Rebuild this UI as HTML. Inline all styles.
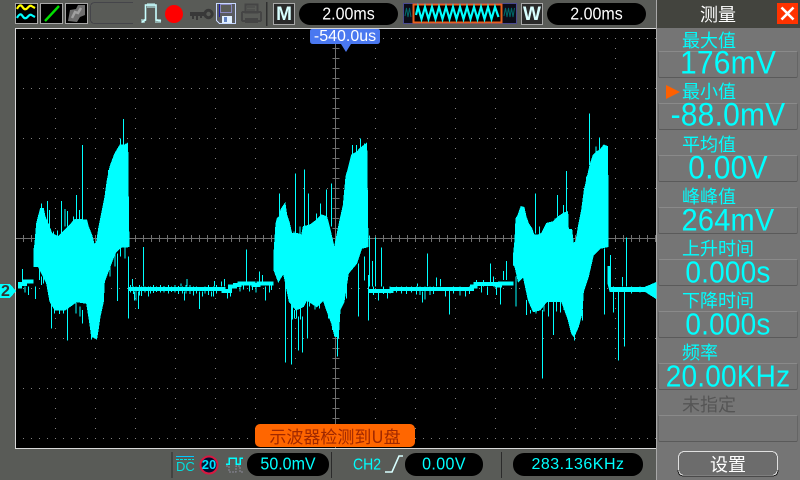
<!DOCTYPE html>
<html><head><meta charset="utf-8">
<style>
html,body{margin:0;padding:0;background:#595b57}
#r{position:relative;width:800px;height:480px;overflow:hidden;background:#595b57;font-family:"Liberation Sans","WenQuanYi Zen Hei",sans-serif}
#r div{position:absolute;box-sizing:border-box;white-space:nowrap}
svg{position:absolute;left:0;top:0}
.pill{background:#000;border-radius:11px;text-align:center;height:23px;line-height:23px;font-size:16px}
.pill span{display:inline-block;transform:scaleY(1.12)}
.cj{font-family:"WenQuanYi Zen Hei","Noto Sans CJK SC",sans-serif}
.lb{left:682px;color:#00ffff;font-size:18px;line-height:20px;height:20px;letter-spacing:0}
.bx{left:658px;width:140px;height:27px;border:1px solid #656565;border-top-color:#8a8a8a;border-bottom-color:#5a5a5a;border-radius:2px}
.v{left:658px;width:140px;text-align:center;color:#00ffff;font-size:30px;line-height:28px;height:28px;letter-spacing:.2px;transform:scaleY(1.08)}
</style></head><body><div id="r">

<div style="left:15px;top:28px;width:642px;height:421px;background:#000"></div>

<svg width="800" height="480" shape-rendering="crispEdges" fill="none">
<line x1="15.5" y1="28" x2="15.5" y2="449" stroke="#d8d8d8"/>
<line x1="15" y1="28.5" x2="657" y2="28.5" stroke="#d8d8d8"/>
<line x1="15" y1="448.5" x2="657" y2="448.5" stroke="#d8d8d8"/>
<line x1="656.5" y1="0" x2="656.5" y2="480" stroke="#a8a8a8"/>
<g stroke="#808080" stroke-dasharray="1 7">
<line x1="23" y1="38.5" x2="656" y2="38.5"/><line x1="23" y1="88.5" x2="656" y2="88.5"/><line x1="23" y1="138.5" x2="656" y2="138.5"/><line x1="23" y1="188.5" x2="656" y2="188.5"/><line x1="23" y1="288.5" x2="656" y2="288.5"/><line x1="23" y1="338.5" x2="656" y2="338.5"/><line x1="23" y1="388.5" x2="656" y2="388.5"/><line x1="23" y1="438.5" x2="656" y2="438.5"/>
</g>
<g stroke="#808080" stroke-dasharray="1 9">
<line x1="55.5" y1="38" x2="55.5" y2="448"/><line x1="95.5" y1="38" x2="95.5" y2="448"/><line x1="135.5" y1="38" x2="135.5" y2="448"/><line x1="175.5" y1="38" x2="175.5" y2="448"/><line x1="215.5" y1="38" x2="215.5" y2="448"/><line x1="255.5" y1="38" x2="255.5" y2="448"/><line x1="295.5" y1="38" x2="295.5" y2="448"/><line x1="375.5" y1="38" x2="375.5" y2="448"/><line x1="415.5" y1="38" x2="415.5" y2="448"/><line x1="455.5" y1="38" x2="455.5" y2="448"/><line x1="495.5" y1="38" x2="495.5" y2="448"/><line x1="535.5" y1="38" x2="535.5" y2="448"/><line x1="575.5" y1="38" x2="575.5" y2="448"/><line x1="615.5" y1="38" x2="615.5" y2="448"/>
</g>
<line x1="16" y1="238.5" x2="656" y2="238.5" stroke="#707070"/>
<line x1="335.5" y1="29" x2="335.5" y2="448" stroke="#707070"/>
<line x1="23" y1="238.5" x2="656" y2="238.5" stroke="#707070" stroke-width="7" stroke-dasharray="1 7"/>
<line x1="336" y1="38" x2="336" y2="448" stroke="#707070" stroke-width="7" stroke-dasharray="1 9"/>

<!-- trace 1 -->
<g transform="translate(0,110) scale(.33333)" fill="#00ffff" stroke="#00ffff" stroke-width="3">
<path d="M102 420L105 400 110 340 115 320 122 295 130 295 135 320 148 350 155 370 175 380 190 365 210 345 225 328 260 330 265 350 275 375 283 405 290 395 297 350 305 310 315 260 322 210 330 170 345 130 360 105 375 105 383 100 385 280 387 410 362 412 345 430 330 470 313 515 310 575 300 620 295 655 290 685 275 680 268 630 260 580 230 575 195 600 165 600 150 575 140 520 125 490 115 470 102 470Z"/>
<path fill="none" stroke-width="12" d="M54 530H60V522H75V515H100M387 537H660"/>
<path fill="none" d="M247 105V330M370 27V110M229 255V330M184 273V370M142 273V340M202 303V350M195 297V350M430 411V530M397 507V530M67 477V520M561 507V530M543 520V530M643 513V530M202 570V692M154 570V656M352 430V573M385 440V626M106 530V567M85 530V555M75 530V548M415 545V597M403 545V572M553 545V572M598 545V597M247 600V640M240 590V620M607 545V560M635 545V560"/>
<path fill="none" d="M125 280V320M148 300V360M160 365V400M172 362V400M220 320V350M238 300V340M325 180V240M340 140V200M352 118V160M361 85V130M378 100V160M163 483V610M178 590V612M190 590V610M212 560V590M228 570V610M275 640V688M283 650V685M289 655V688M330 470V500M345 425V470M362 412V440M375 412V445M118 470V510M130 490V520M125 500V525"/>
<path fill="none" d="M392 525V548M400 530V552M408 530V572M418 525V556M425 530V558M435 530V548M445 530V560M452 530V550M460 525V549M470 530V546M482 525V548M492 528V548M505 525V550M515 530V546M525 525V548M535 528V552M548 530V550M558 525V550M570 525V552M580 530V556M590 530V550M615 530V550M625 525V555M640 530V560M650 525V550"/>
</g>
<!-- trace 2 -->
<g transform="translate(220,110) scale(.33333)" fill="#00ffff" stroke="#00ffff" stroke-width="3">
<path d="M162 430L168 340 172 325 178 320 183 298 195 280 200 315 207 335 215 370 230 370 245 375 250 350 270 345 290 330 305 315 320 320 328 350 335 380 343 415 350 380 360 330 370 285 378 200 385 175 395 135 412 125 420 115 440 100 442 255 444 410 425 415 410 460 385 490 372 575 360 600 355 680 345 680 335 640 320 600 310 570 290 590 260 570 250 590 228 600 208 575 195 510 190 490 175 515 162 480Z"/>
<path fill="none" stroke-width="12" d="M0 537H10V543H30V530H45V525H58V520H100V525H115V520H160M446 543H515V537H660"/>
<path fill="none" d="M178 250V320M226 190V370M253 178V350M265 250V350M319 238V320M334 220V350M301 280V320M289 310V340M79 418V520M118 485V520M127 495V520M448 377V530M466 382V530M484 412V530M457 453V530M622 430V530M649 502V530M592 520V530M13 507V530M4 514V530M196 510V758M214 575V764M235 620V722M247 620V728M262 570V686M223 600V626M445 495V632M415 460V620M433 440V512M607 545V578M475 540V572M502 545V566M22 540V566M31 540V560M136 530V572M379 520V566M352 660V740"/>
<path fill="none" d="M397 105V160M409 105V150M421 85V120M433 100V140M380 190V220M222 365V400M240 350V380M218 570V628M229 590V625M241 590V628M268 565V590M285 565V598M298 565V596M355 640V685M338 620V660M325 590V625"/>
<path fill="none" d="M60 525V545M70 520V538M88 525V544M98 525V540M108 525V548M148 525V548M155 518V540M460 530V555M490 530V552M510 530V550M530 530V548M545 530V550M560 530V552M575 530V548M590 530V554M600 530V555M615 530V568M630 530V555M640 530V552"/>
</g>
<!-- trace 3 -->
<g transform="translate(440,110) scale(.33333)" fill="#00ffff" stroke="#00ffff" stroke-width="3">
<path d="M220 440L225 390 228 325 232 320 236 310 243 290 252 292 258 320 265 340 275 355 282 375 295 375 305 370 320 340 340 335 355 320 370 310 383 305 385 358 395 358 400 400 408 395 415 350 425 300 433 240 440 210 450 165 460 135 470 125 480 120 492 105 503 110 504 410 480 415 460 435 445 500 430 545 426 610 415 650 402 680 395 670 385 630 365 575 320 575 300 600 280 605 265 570 250 500 235 515 225 470 220 465Z"/>
<path d="M504 470H512V532H615L648 518V565L615 544H510L504 520Z"/>
<path fill="none" stroke-width="12" d="M0 537H96V530H106V522H170V527H180V520H220"/>
<path fill="none" d="M286 250V370M379 183V310M352 255V320M370 285V310M448 10V165M478 82V120M151 460V520M199 453V510M190 483V510M559 382V530M547 501V530M511 435V530M1 507V530M307 600V806M535 545V752M553 545V710M493 415V614M520 545V608M340 575V675M28 540V614M181 530V584M259 570V615M228 500V590M403 670V692M427 600V632M16 540V560M76 540V560M124 525V548M142 530V555M169 530V555"/>
<path fill="none" d="M468 110V135M440 200V230M298 350V375M345 325V345M272 600V610M288 590V610M312 575V605M325 570V620M350 570V605M362 570V608M372 570V600M381 590V620"/>
<path fill="none" d="M40 530V550M60 530V556M88 530V552M110 510V530M130 510V530M160 500V530M520 530V555M575 530V550M600 530V548"/>
</g>
<path d="M648 289L656 283V296Z" fill="#00ffff"/>
<path d="M0 284H10L16 291 10 298H0Z" fill="#00ffff"/>

<!-- top-left buttons -->
<rect x="15.5" y="3.5" width="22" height="20" fill="#000" stroke="#a8a8a8"/>
<path d="M17 9q3-6 5.500-2t5 1 4-2 3.500 2" stroke="#ffff00" stroke-width="2.200" shape-rendering="auto"/>
<path d="M17 18q3-6 5.500-2t5 1 4-2 3.500 2" stroke="#00ffff" stroke-width="2.200" shape-rendering="auto"/>
<rect x="40.5" y="3.500" width="22" height="20" fill="#000" stroke="#a8a8a8"/>
<line x1="45" y1="21" x2="59" y2="6" stroke="#00e000" stroke-width="2.400" shape-rendering="auto"/>
<rect x="65.5" y="3.500" width="22" height="20" fill="#000" stroke="#a8a8a8"/>
<path d="M68 21L70 10 76 9 78 5 85 5 85 15 80 17 77 22Z" fill="#6e6e6e" shape-rendering="auto"/>
<path d="M72 18L75 12 78 13 81 8" stroke="#a0a0a0" stroke-width="2.500" shape-rendering="auto"/>
<path d="M133 2.500H95Q90.500 2.500 90.500 7V19Q90.500 23.500 95 23.500H133" stroke="#45454a"/>
<!-- pulse -->
<path d="M142 22L145.500 20V5H156V20L161 21" stroke="#c8ffff" stroke-width="1.600" shape-rendering="auto"/>
<path d="M148 3V8M150 3V8M152 3V8M154 3V8M142 19V23M144 19V23M156 19V23M158 19V23M160 19V23" stroke="#c8ffff"/>
<circle cx="174" cy="14" r="9" fill="#ff0000" shape-rendering="auto"/>
<!-- key -->
<path d="M190 14H206" stroke="#383838" stroke-width="4"/>
<path d="M193 15V19M197 15V20M201 15V18" stroke="#383838" stroke-width="2"/>
<circle cx="208.500" cy="14" r="3.700" stroke="#383838" stroke-width="3" shape-rendering="auto"/>
<!-- floppy -->
<path d="M216.500 3.500H235.500V23.500H219.500L216.500 20.500Z" fill="#595b60" stroke="#c8d8ff"/>
<rect x="220.500" y="4.500" width="11" height="8" fill="#595b57" stroke="#8888c0"/>
<rect x="222" y="16" width="10" height="7" fill="#e0f0ff"/>
<rect x="224" y="17" width="3" height="5" fill="#6080c0"/>
<rect x="219" y="4" width="1" height="13" fill="#2020a0"/>
<!-- printer -->
<rect x="245.500" y="4.500" width="12" height="8" stroke="#454545" stroke-width="2"/>
<path d="M247 7H255M247 10H255" stroke="#454545"/>
<rect x="242" y="12" width="19" height="9" rx="1" stroke="#454545" stroke-width="2"/>
<rect x="245" y="18" width="13" height="5" fill="#454545"/>
<line x1="266.500" y1="2" x2="266.500" y2="26" stroke="#303030" stroke-width="1.500"/>
<!-- M / W -->
<rect x="273.500" y="3.500" width="21" height="21" fill="#2a2a2a" stroke="#a8a8a8"/>
<rect x="521.500" y="3.500" width="21" height="21" fill="#2a2a2a" stroke="#a8a8a8"/>
<!-- thumb -->
<rect x="403.500" y="3.500" width="113" height="20" fill="#0c0c18" stroke="#4a4a90"/>
<path d="M405 16l1.500-8 1.500 9 1.500-9 1.500 9M504 16l1.500-8 1.500 9 1.500-9 1.500 9 1.500-9 1.500 9 1.500-9" stroke="#006868" shape-rendering="auto"/>
<rect x="413.500" y="4.500" width="88" height="18" fill="#000" stroke="#e8601c" stroke-width="2"/>
<path d="M416 15L418 7 421.500 19 425 7 428.500 19 432 7 435.500 19 439 7 442.500 19 446 7 449.500 19 453 7 456.500 19 460 7 463.500 19 467 7 470.500 19 474 7 477.500 19 481 7 484.500 19 488 7 491.500 19 495 7 498.500 17" stroke="#00ffff" stroke-width="2.200" shape-rendering="auto"/>
<!-- bottom separators -->
<line x1="172" y1="452" x2="172" y2="478" stroke="#2b2b2b"/>
<line x1="331.500" y1="452" x2="331.500" y2="478" stroke="#2b2b2b"/>
<line x1="501.500" y1="452" x2="501.500" y2="478" stroke="#2b2b2b"/>
<line x1="176" y1="456.500" x2="194" y2="456.500" stroke="#00c8ff"/>
<line x1="176" y1="459.500" x2="194" y2="459.500" stroke="#00e0e0" stroke-dasharray="3 1"/>
<circle cx="209" cy="465" r="8.500" fill="#001030" stroke="#d81840" stroke-width="2" shape-rendering="auto"/>
<path d="M226 464H229V458H236V464H240V458H243" stroke="#00ffff" stroke-width="1.500"/>
<path d="M226 466H229V472H236V466H240V472H243" stroke="#8a8a9a" stroke-dasharray="2 1"/>
<path d="M385 472H392L399 456H403" stroke="#d8ffff" stroke-width="1.600" shape-rendering="auto"/>
<!-- panel -->
<rect x="657" y="0" width="143" height="480" fill="#757575"/>
<rect x="657" y="0" width="143" height="28" fill="#43443e"/>
<rect x="777" y="3" width="21" height="21" fill="#ff3300"/>
<path d="M781.500 7.500L793.500 19.500M793.500 7.500L781.500 19.500" stroke="#ffffff" stroke-width="2.600" shape-rendering="auto"/>
<path d="M666 85V99L680 92Z" fill="#ff6000" shape-rendering="auto"/>
<rect x="678.500" y="451.500" width="99" height="24" rx="6" fill="#6c6c6c" stroke="#e0e0e0"/>
<path d="M678 470Q678 476 684 476H772Q778 476 778 470" stroke="#1e1e1e"/>
</svg>

<svg width="800" height="60" shape-rendering="auto"><path d="M312 29H378Q380 29 380 31V41Q380 44 377 44H351L346 52 341 44H313Q310 44 310 41V31Q310 29 312 29Z" fill="#4a78f0"/></svg>
<div style="left:310px;top:28px;width:70px;text-align:center;color:#fff;font-size:16px;line-height:18px">-540.0us</div>

<div style="left:0;top:284px;width:11px;text-align:center;color:#333;font-weight:bold;font-size:16px;line-height:15px">2</div>

<div style="left:273px;top:3px;width:22px;text-align:center;color:#d8ffff;font-weight:bold;font-size:19px;line-height:23px">M</div>
<div style="left:521px;top:3px;width:22px;text-align:center;color:#d8ffff;font-weight:bold;font-size:19px;line-height:23px">W</div>
<div class="pill" style="left:299px;top:3px;width:99px;height:22px;color:#fff;line-height:24px"><span>2.00ms</span></div>
<div class="pill" style="left:547px;top:3px;width:99px;height:22px;color:#fff;line-height:24px"><span>2.00ms</span></div>

<div class="cj" style="left:255px;top:424px;width:160px;height:23px;background:#ff6600;border-radius:5px;text-align:center;color:#a02800;font-size:17px;line-height:23px">示波器检测到U盘</div>

<div style="left:176px;top:460px;width:18px;text-align:center;color:#00e0e0;font-size:13px;line-height:14px">DC</div>
<div style="left:200px;top:458px;width:18px;text-align:center;color:#00e0ff;font-weight:bold;font-size:13px;line-height:14px">20</div>
<div class="pill" style="left:247px;top:453px;width:82px;color:#00ffff"><span>50.0mV</span></div>
<div style="left:353px;top:453px;color:#00ffff;font-size:14px;line-height:23px;transform:scaleY(1.15)">CH2</div>
<div class="pill" style="left:405px;top:453px;width:78px;color:#00ffff;letter-spacing:.4px"><span>0.00V</span></div>
<div class="pill" style="left:513px;top:453px;width:130px;color:#00ffff;letter-spacing:.5px">283.136KHz</div>

<div class="cj" style="left:700px;top:4px;color:#fff;font-size:18px;line-height:20px">测量</div>

<div class="bx" style="top:51px"></div><div class="bx" style="top:103px"></div><div class="bx" style="top:155px"></div><div class="bx" style="top:207px"></div><div class="bx" style="top:259px"></div><div class="bx" style="top:311px"></div><div class="bx" style="top:363px"></div><div class="bx" style="top:415px"></div>

<div class="lb cj" style="top:30px">最大值</div><div class="v" style="top:50px">176mV</div>
<div class="lb cj" style="top:81px">最小值</div><div class="v" style="top:102px">-88.0mV</div>
<div class="lb cj" style="top:134px">平均值</div><div class="v" style="top:155px;font-size:30px">0.00V</div>
<div class="lb cj" style="top:186px">峰峰值</div><div class="v" style="top:207px;font-size:29px">264mV</div>
<div class="lb cj" style="top:238px">上升时间</div><div class="v" style="top:259px;font-size:28px">0.000s</div>
<div class="lb cj" style="top:290px">下降时间</div><div class="v" style="top:311px;font-size:28px">0.000s</div>
<div class="lb cj" style="top:342px">频率</div><div class="v" style="top:363px;font-size:28px">20.00KHz</div>
<div class="lb cj" style="top:394px;color:#555">未指定</div>
<div class="cj" style="left:678px;top:453px;width:100px;text-align:center;color:#fff;font-size:18px;line-height:23px">设置</div>

</div></body></html>
